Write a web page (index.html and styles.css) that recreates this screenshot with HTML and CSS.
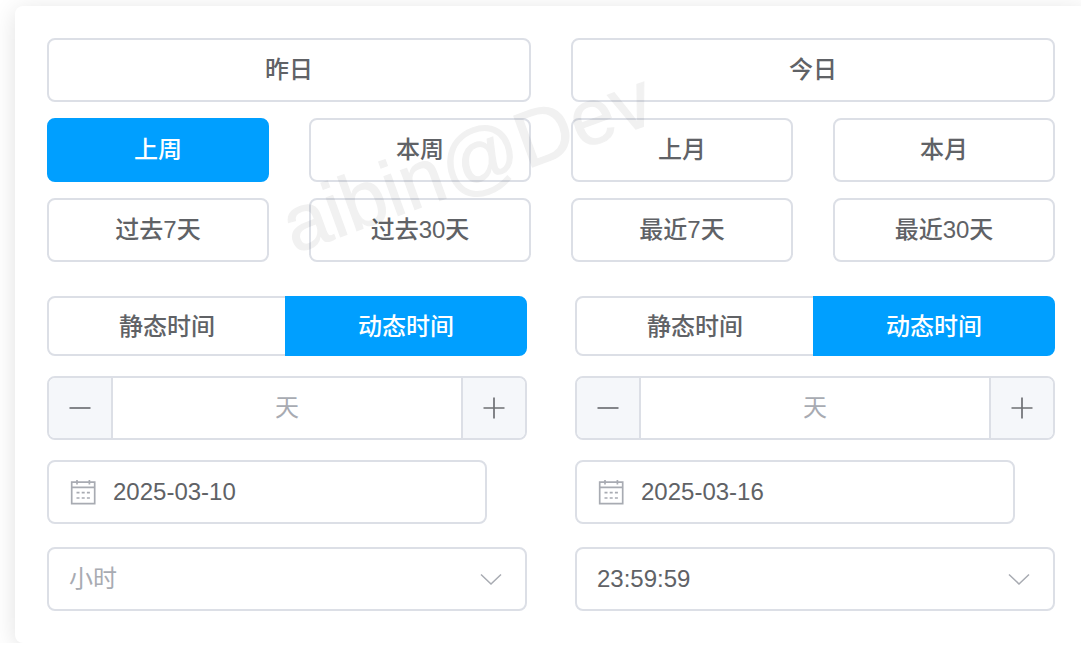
FILE: index.html
```html
<!DOCTYPE html>
<html lang="zh-CN">
<head>
<meta charset="utf-8">
<meta name="viewport" content="width=device-width, initial-scale=1">
<title>时间范围选择</title>
<link rel="stylesheet" href="styles.css">
</head>
<body>
<main class="stage">
  <section class="picker">
    <div class="shortcuts">
      <button type="button" class="shortcut shortcut-wide">昨日</button>
      <button type="button" class="shortcut shortcut-wide">今日</button>
      <button type="button" class="shortcut is-active">上周</button>
      <button type="button" class="shortcut">本周</button>
      <button type="button" class="shortcut">上月</button>
      <button type="button" class="shortcut">本月</button>
      <button type="button" class="shortcut">过去7天</button>
      <button type="button" class="shortcut">过去30天</button>
      <button type="button" class="shortcut">最近7天</button>
      <button type="button" class="shortcut">最近30天</button>
    </div>

    <div class="range">
      <div class="side">
        <div class="toggle" role="radiogroup" aria-label="开始时间类型">
          <label class="toggle-item"><input type="radio" name="start-mode"><span>静态时间</span></label>
          <label class="toggle-item"><input type="radio" name="start-mode" checked><span>动态时间</span></label>
        </div>
        <div class="stepper">
          <button type="button" class="step" aria-label="减少">
            <svg width="28" height="28" viewBox="0 0 28 28"><path d="M3.5 14H24.5"/></svg>
          </button>
          <input class="step-input" type="text" inputmode="numeric" placeholder="天" aria-label="开始天数">
          <button type="button" class="step" aria-label="增加">
            <svg width="28" height="28" viewBox="0 0 28 28"><path d="M3.5 14H24.5M14 3.5V24.5"/></svg>
          </button>
        </div>
        <label class="date">
          <svg class="date-icon" width="28" height="28" viewBox="0 0 28 28"><path d="M2.7 4.2H25.7V25.6H2.7ZM2.7 9.4H25.7M8 2V6.5M20.4 2V6.5M7.5 14.7H10.5M12.7 14.7H15.7M17.9 14.7H20.9M7.5 20H10.5M12.7 20H15.7M17.9 20H20.9"/></svg>
          <input class="date-input" type="text" value="2025-03-10" aria-label="开始日期">
        </label>
        <div class="time">
          <select class="time-select is-empty" aria-label="开始小时"><option>小时</option></select>
          <svg class="time-arrow" width="28" height="28" viewBox="0 0 28 28"><path d="M4 9.5L14 19L24 9.5"/></svg>
        </div>
      </div>

      <div class="side">
        <div class="toggle" role="radiogroup" aria-label="结束时间类型">
          <label class="toggle-item"><input type="radio" name="end-mode"><span>静态时间</span></label>
          <label class="toggle-item"><input type="radio" name="end-mode" checked><span>动态时间</span></label>
        </div>
        <div class="stepper">
          <button type="button" class="step" aria-label="减少">
            <svg width="28" height="28" viewBox="0 0 28 28"><path d="M3.5 14H24.5"/></svg>
          </button>
          <input class="step-input" type="text" inputmode="numeric" placeholder="天" aria-label="结束天数">
          <button type="button" class="step" aria-label="增加">
            <svg width="28" height="28" viewBox="0 0 28 28"><path d="M3.5 14H24.5M14 3.5V24.5"/></svg>
          </button>
        </div>
        <label class="date">
          <svg class="date-icon" width="28" height="28" viewBox="0 0 28 28"><path d="M2.7 4.2H25.7V25.6H2.7ZM2.7 9.4H25.7M8 2V6.5M20.4 2V6.5M7.5 14.7H10.5M12.7 14.7H15.7M17.9 14.7H20.9M7.5 20H10.5M12.7 20H15.7M17.9 20H20.9"/></svg>
          <input class="date-input" type="text" value="2025-03-16" aria-label="结束日期">
        </label>
        <div class="time">
          <select class="time-select" aria-label="结束小时"><option>23:59:59</option></select>
          <svg class="time-arrow" width="28" height="28" viewBox="0 0 28 28"><path d="M4 9.5L14 19L24 9.5"/></svg>
        </div>
      </div>
    </div>
  </section>
  <div class="watermark" aria-hidden="true">aibin@Dev</div>
</main>
</body>
</html>
```
FILE: styles.css
```css
:root {
  --line: #dcdfe6;
  --text: #606266;
  --muted: #a8abb2;
  --primary: #009fff;
}

* {
  box-sizing: border-box;
}

body {
  margin: 0;
  background: #fff;
  color: var(--text);
}

body,
button,
input,
select {
  font-family: "Liberation Sans", "Noto Sans CJK SC", sans-serif;
  font-size: 24px;
  line-height: 36px;
}

svg {
  display: block;
  fill: none;
  stroke: currentColor;
}

.stage {
  position: relative;
  overflow: hidden;
  padding: 6px 0 0 15px;
}

.picker {
  margin-right: -6px;
  padding: 32px;
  border-radius: 8px;
  background: #fff;
  box-shadow: 0 4px 24px rgba(0, 0, 0, 0.12);
}

.shortcuts {
  display: grid;
  grid-template-columns: repeat(4, 1fr);
  gap: 16px 40px;
}

.shortcut {
  height: 64px;
  padding: 0;
  border: 2px solid var(--line);
  border-radius: 8px;
  background: #fff;
  color: var(--text);
  font-weight: 500;
}

.shortcut-wide {
  grid-column: span 2;
}

.shortcut.is-active {
  border-color: var(--primary);
  background: var(--primary);
  color: #fff;
}

.range {
  display: grid;
  grid-template-columns: 1fr 1fr;
  gap: 48px;
  margin-top: 34px;
}

.side {
  display: flex;
  flex-direction: column;
  gap: 20px;
}

.toggle {
  display: flex;
}

.toggle-item {
  position: relative;
  width: 50%;
  font-weight: 500;
}

.toggle-item input {
  position: absolute;
  inset: 0;
  margin: 0;
  opacity: 0;
}

.toggle-item span {
  display: block;
  padding: 11px 0 9px;
  border: 2px solid var(--line);
  border-radius: 8px 0 0 8px;
  text-align: center;
}

.toggle-item + .toggle-item {
  width: calc(50% + 2px);
  margin-left: -2px;
}

.toggle-item + .toggle-item span {
  border-radius: 0 8px 8px 0;
}

.toggle-item input:checked + span {
  border-color: var(--primary);
  background: var(--primary);
  color: #fff;
}

.stepper,
.date {
  display: flex;
  height: 64px;
  border: 2px solid var(--line);
  border-radius: 8px;
  overflow: hidden;
}

.step {
  display: flex;
  align-items: center;
  justify-content: center;
  width: 64px;
  padding: 0;
  border: 0;
  background: #f5f7fa;
  color: var(--text);
}

.step svg {
  stroke-width: 1.7;
  opacity: 0.9;
}

.step:first-child {
  border-right: 2px solid var(--line);
}

.step:last-child {
  border-left: 2px solid var(--line);
}

.step-input,
.date-input {
  flex: 1;
  min-width: 0;
  padding: 0;
  border: 0;
  background: none;
  color: var(--text);
}

.step-input {
  text-align: center;
}

.step-input::placeholder {
  color: var(--muted);
}

.date {
  align-items: center;
  gap: 16px;
  margin-right: 40px;
  padding: 0 20px;
}

.date-icon {
  color: var(--muted);
  stroke-width: 1.7;
}

.time {
  position: relative;
  margin-top: 3px;
}

.time-select {
  display: block;
  width: 100%;
  height: 64px;
  padding: 0 60px 0 20px;
  border: 2px solid var(--line);
  border-radius: 8px;
  appearance: none;
  background: #fff;
  color: var(--text);
}

.time-select.is-empty {
  color: var(--muted);
}

.time-arrow {
  position: absolute;
  top: 18px;
  right: 22px;
  color: var(--muted);
  stroke-width: 1.5;
  pointer-events: none;
}

.watermark {
  position: absolute;
  top: 162px;
  left: 467px;
  color: #000;
  font-size: 79px;
  line-height: 80px;
  opacity: 0.05;
  -webkit-text-stroke: 1px #000;
  transform: translate(-50%, -50%) rotate(-20deg);
  pointer-events: none;
}
```
